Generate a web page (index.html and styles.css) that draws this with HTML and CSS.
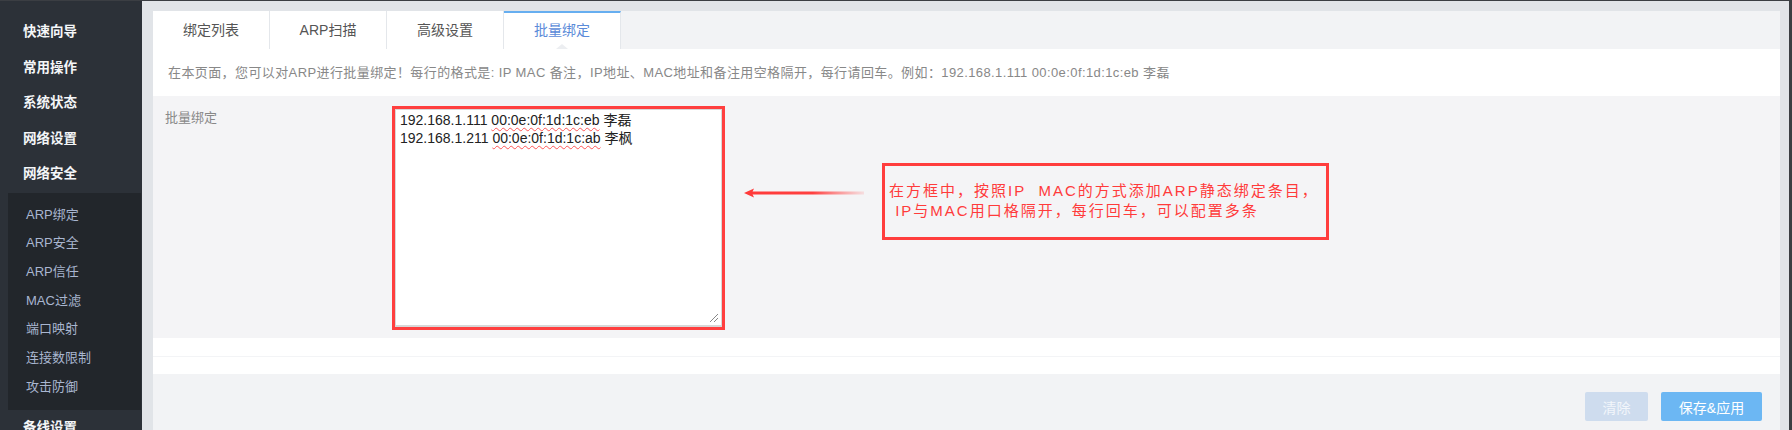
FILE: index.html
```html
<!DOCTYPE html>
<html lang="zh-CN">
<head>
    <meta charset="UTF-8">
    <meta name="viewport" content="width=device-width, initial-scale=1.0">
    <title>批量绑定</title>
    <link rel="stylesheet" href="styles.css">
</head>
<body>

    <div class="app">
        <aside class="sidebar">
            <ul class="menu">
                <li class="menu_item">快速向导</li>
                <li class="menu_item">常用操作</li>
                <li class="menu_item">系统状态</li>
                <li class="menu_item">网络设置</li>
                <li class="menu_item">网络安全</li>
            </ul>
            <ul class="submenu">
                <li>ARP绑定</li>
                <li>ARP安全</li>
                <li>ARP信任</li>
                <li>MAC过滤</li>
                <li>端口映射</li>
                <li>连接数限制</li>
                <li>攻击防御</li>
            </ul>
            <ul class="menu">
                <li class="menu_item">备线设置</li>
            </ul>
        </aside>

        <main class="main">
            <div class="panel">

                <ul class="tabs">
                    <li class="tab">绑定列表</li>
                    <li class="tab">ARP扫描</li>
                    <li class="tab">高级设置</li>
                    <li class="tab active">批量绑定</li>
                </ul>

                <div class="tip">在本页面，您可以对ARP进行批量绑定！每行的格式是: IP MAC 备注，IP地址、MAC地址和备注用空格隔开，每行请回车。例如：192.168.1.111 00:0e:0f:1d:1c:eb 李磊</div>

                <div class="form_row">
                    <span class="form_label">批量绑定</span>

                    <div class="mark_box">
                        <div class="textarea">
                            <div>192.168.1.111 <span class="typo">00:0e:0f:1d:1c:eb</span> 李磊</div>
                            <div>192.168.1.211 <span class="typo">00:0e:0f:1d:1c:ab</span> 李枫</div>
                            <svg class="grip" width="10" height="10" viewBox="0 0 10 10">
                                <path d="M1 9 L9 1 M5 9 L9 5" stroke="#888" stroke-width="1"/>
                            </svg>
                        </div>
                    </div>

                    <svg class="arrow" width="120" height="12" viewBox="0 0 120 12">
                        <defs>
                            <linearGradient id="fade" x1="0" x2="1" y1="0" y2="0">
                                <stop offset="0" stop-color="#ff3a3a"/>
                                <stop offset="0.55" stop-color="#ff4040"/>
                                <stop offset="1" stop-color="#ff6060" stop-opacity="0.15"/>
                            </linearGradient>
                        </defs>
                        <rect x="6" y="4.5" width="114" height="3" fill="url(#fade)"/>
                        <polygon points="0,6 10,1.5 8,6 10,10.5" fill="#ff3a3a"/>
                    </svg>

                    <div class="note">
                        <p>在方框中，按照IP&nbsp; MAC的方式添加ARP静态绑定条目，</p>
                        <p>&nbsp;IP与MAC用口格隔开，每行回车，可以配置多条</p>
                    </div>
                </div>

                <div class="blank"></div>
                <div class="blank blank_last"></div>

                <div class="footer">
                    <button class="btn btn_clear">清除</button>
                    <button class="btn btn_save">保存&amp;应用</button>
                </div>

            </div>
        </main>
    </div>

</body>
</html>
```

FILE: styles.css
```css
*{box-sizing: border-box;}
body{margin: 0; border-top: 1px solid #3b3e43; background: #e1e4e8; font-family: "Liberation Sans", "Noto Sans CJK SC", sans-serif; overflow: hidden;}
ul{list-style: none; margin: 0; padding: 0;}
p{margin: 0;}

.app{display: flex; height: 429px;}

/* SIDEBAR */
.sidebar{width: 142px; flex: none; background: #2c3138; padding-top: 13px; overflow: hidden;}
.menu_item{height: 35.5px; line-height: 35.5px; padding-left: 23px; color: #f4f6f8; font-size: 13.5px; font-weight: bold;}
.submenu{width: 133px; margin: 1px 0 0 8px; padding: 8px 0 9px; background: #22262b;}
.submenu li{height: 28.7px; line-height: 28.7px; padding-left: 18px; color: #a9b6d0; font-size: 13px;}

/* MAIN */
.main{flex: 1; padding: 10px 9px 0 11px; border-right: 3px solid #3b3e43;}
.panel{height: 100%; background: #f2f3f5; display: flex; flex-direction: column; overflow: hidden;}

.tabs{display: flex; height: 38px; flex: none;}
.tab{position: relative; width: 117px; background: #fff; border-right: 1px solid #e4e7eb; text-align: center; line-height: 38px; font-size: 14px; color: #555;}
.tab.active{border-top: 2px solid #66aef0; line-height: 35px; color: #5b8bd9;}
.tab.active::after{content: ""; position: absolute; left: 50%; bottom: 0; margin-left: -6px; border: 6px solid transparent; border-top: 0; border-bottom: 5px solid #eceef1;}

.tip{height: 47px; flex: none; line-height: 47px; padding-left: 15px; background: #fff; color: #888; font-size: 13px; letter-spacing: 0.4px; white-space: nowrap;}

.form_row{display: flex; align-items: flex-start; height: 242px; flex: none; padding-top: 10px; background: #f4f4f6;}
.form_label{width: 239px; flex: none; padding-left: 12px; margin-top: 3px; line-height: 18px; color: #888; font-size: 13px;}

.mark_box{width: 333px; height: 224px; flex: none; border: 3px solid #ff3f3f;}
.textarea{position: relative; height: 100%; background: #fff; border: 1px solid #d8d8d8; border-bottom-width: 2px; padding: 1px 4px; font-size: 14px; line-height: 18px; color: #222;}
.typo{text-decoration: underline wavy #f55; text-decoration-thickness: 1px; text-underline-offset: 2px;}
.grip{position: absolute; right: 2px; bottom: 2px;}

.arrow{flex: none; margin: 81px 0 0 19px;}

.note{width: 447px; height: 77px; flex: none; margin: 57px 0 0 18px; border: 3px solid #ff3d3d; padding: 15px 0 0 4px; color: #ff3b3b; font-size: 15px; line-height: 20px; letter-spacing: 2px; white-space: nowrap;}

.blank{height: 19px; flex: none; background: #fff; border-bottom: 1px solid #f3f4f6;}
.blank_last{height: 17px; border-bottom: 0;}

.footer{display: flex; justify-content: flex-end; gap: 13px; padding: 18px 18px 0 0;}
.btn{height: 29px; border: 0; border-radius: 2px; font-family: inherit; font-size: 14px; color: #fff;}
.btn_clear{width: 63px; background: #cedcee; color: #f2f6fb;}
.btn_save{width: 101px; background: #6cb7f3;}
```
